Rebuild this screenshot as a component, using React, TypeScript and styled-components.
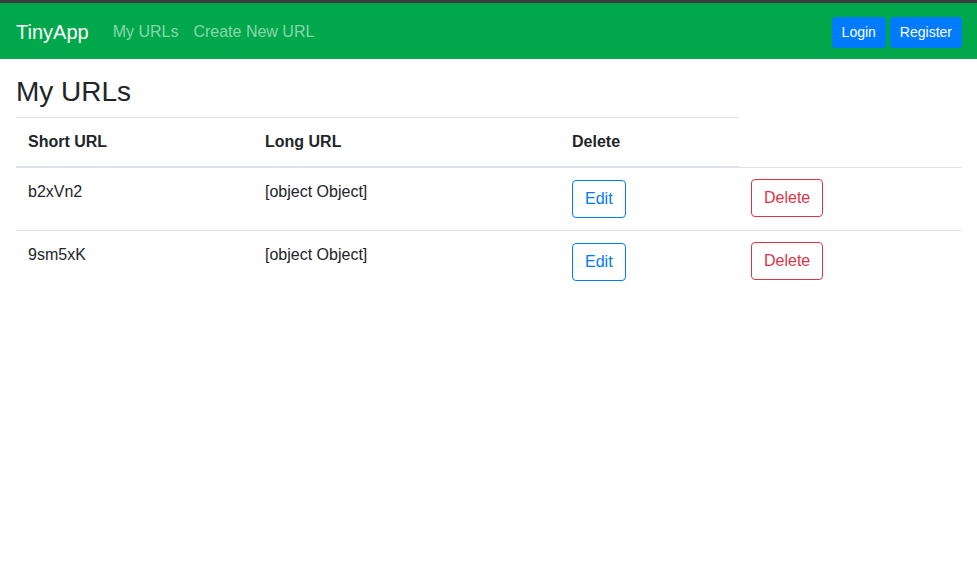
import React from "react";
import styled, { createGlobalStyle } from "styled-components";

const GlobalStyle = createGlobalStyle`
  html, body { margin: 0; padding: 0; background: #fff; }
  body {
    font-family: "Liberation Sans", Arial, sans-serif;
    font-size: 16px;
    line-height: 1.5;
    color: #212529;
  }
  * { box-sizing: border-box; }
`;

const Navbar = styled.nav`
  display: flex;
  align-items: center;
  height: 59px;
  padding: 2px 15px 0 16px;
  border-top: 3px solid #3b3b3b;
  background: #00a74b;
`;

const Brand = styled.a`
  font-size: 20px;
  line-height: 30px;
  color: #fff;
  margin-right: 16px;
  text-decoration: none;
`;

const NavLinks = styled.div`
  display: flex;
  flex: 1;
`;

const NavLink = styled.a`
  color: rgba(255, 255, 255, 0.55);
  padding: 8px 7px 8px 8px;
  font-size: 16px;
  text-decoration: none;
`;

const NavActions = styled.div`
  display: flex;
  gap: 4px;
`;

const NavButton = styled.button`
  font-family: inherit;
  font-size: 14px;
  line-height: 21px;
  padding: 4px 9px;
  border: 1px solid #007bff;
  border-radius: 3px;
  background: #007bff;
  color: #fff;
`;

const Main = styled.main`
  padding: 16px 15px 0 16px;
`;

const Title = styled.h3`
  margin: 0 0 8px;
  font-size: 28px;
  font-weight: 500;
  line-height: 1.2;
  height: 34px;
`;

const Table = styled.table`
  width: 100%;
  border-collapse: collapse;
`;

const HeadCell = styled.th<{ $w: number }>`
  width: ${(p) => p.$w}px;
  text-align: left;
  padding: 12px;
  font-weight: 700;
  vertical-align: bottom;
  border-top: 1px solid #dee2e6;
  border-bottom: 2px solid #dee2e6;
`;

const Cell = styled.td`
  padding: 12px;
  vertical-align: top;
  border-top: 1px solid #dee2e6;
`;

const OutlineButton = styled.button<{ $color: string; $lift?: boolean }>`
  font-family: inherit;
  font-size: 16px;
  line-height: 24px;
  padding: 6px 12px;
  background: #fff;
  border: 1px solid ${(p) => p.$color};
  color: ${(p) => p.$color};
  border-radius: 4px;
  margin-top: ${(p) => (p.$lift ? "-1px" : "0")};
  display: block;
`;

const rows = [
  { short: "b2xVn2", long: "[object Object]" },
  { short: "9sm5xK", long: "[object Object]" },
];

export default function App() {
  return (
    <>
      <GlobalStyle />
      <Navbar>
        <Brand>TinyApp</Brand>
        <NavLinks>
          <NavLink>My URLs</NavLink>
          <NavLink>Create New URL</NavLink>
        </NavLinks>
        <NavActions>
          <NavButton>Login</NavButton>
          <NavButton>Register</NavButton>
        </NavActions>
      </Navbar>
      <Main>
        <Title>My URLs</Title>
        <Table>
          <thead>
            <tr>
              <HeadCell $w={237}>Short URL</HeadCell>
              <HeadCell $w={307}>Long URL</HeadCell>
              <HeadCell $w={179}>Delete</HeadCell>
            </tr>
          </thead>
          <tbody>
            {rows.map((r) => (
              <tr key={r.short}>
                <Cell>{r.short}</Cell>
                <Cell>{r.long}</Cell>
                <Cell>
                  <OutlineButton $color="#007bff">Edit</OutlineButton>
                </Cell>
                <Cell>
                  <OutlineButton $color="#dc3545" $lift>
                    Delete
                  </OutlineButton>
                </Cell>
              </tr>
            ))}
          </tbody>
        </Table>
      </Main>
    </>
  );
}
